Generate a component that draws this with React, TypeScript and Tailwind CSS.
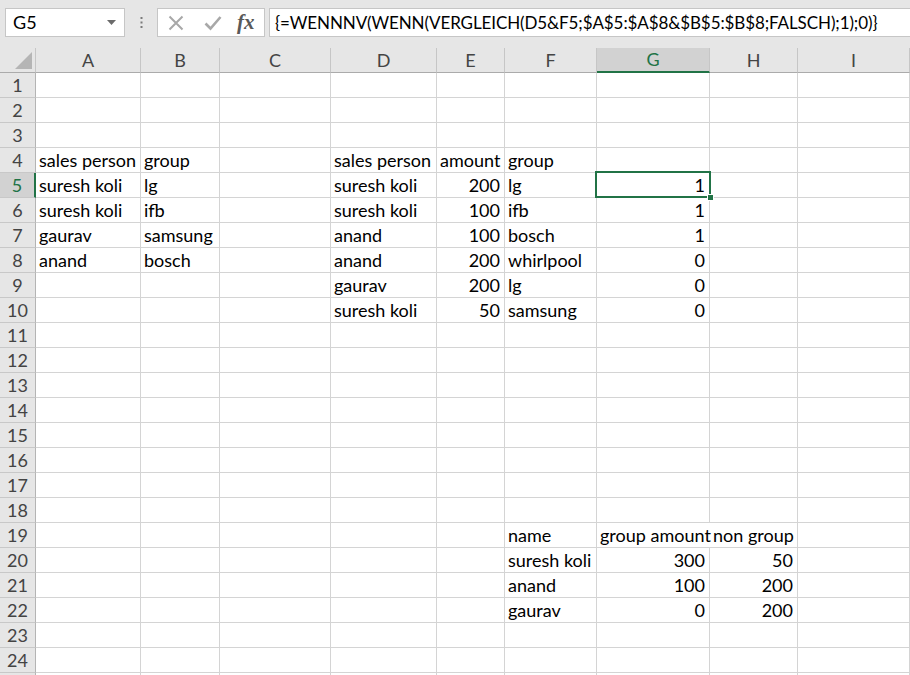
import React from "react";

const COLS = ["A", "B", "C", "D", "E", "F", "G", "H", "I"];
const WIDTHS = ["w-[105px]", "w-[79px]", "w-[111px]", "w-[106px]", "w-[68px]", "w-[92px]", "w-[113px]", "w-[88px]", "flex-1"];

type CellVal = { t: string; r?: boolean };
const data: Record<number, Record<string, CellVal>> = {
  4: { A: { t: "sales person" }, B: { t: "group" }, D: { t: "sales person" }, E: { t: "amount" }, F: { t: "group" } },
  5: { A: { t: "suresh koli" }, B: { t: "lg" }, D: { t: "suresh koli" }, E: { t: "200", r: true }, F: { t: "lg" }, G: { t: "1", r: true } },
  6: { A: { t: "suresh koli" }, B: { t: "ifb" }, D: { t: "suresh koli" }, E: { t: "100", r: true }, F: { t: "ifb" }, G: { t: "1", r: true } },
  7: { A: { t: "gaurav" }, B: { t: "samsung" }, D: { t: "anand" }, E: { t: "100", r: true }, F: { t: "bosch" }, G: { t: "1", r: true } },
  8: { A: { t: "anand" }, B: { t: "bosch" }, D: { t: "anand" }, E: { t: "200", r: true }, F: { t: "whirlpool" }, G: { t: "0", r: true } },
  9: { D: { t: "gaurav" }, E: { t: "200", r: true }, F: { t: "lg" }, G: { t: "0", r: true } },
  10: { D: { t: "suresh koli" }, E: { t: "50", r: true }, F: { t: "samsung" }, G: { t: "0", r: true } },
  19: { F: { t: "name" }, G: { t: "group amount" }, H: { t: "non group" } },
  20: { F: { t: "suresh koli" }, G: { t: "300", r: true }, H: { t: "50", r: true } },
  21: { F: { t: "anand" }, G: { t: "100", r: true }, H: { t: "200", r: true } },
  22: { F: { t: "gaurav" }, G: { t: "0", r: true }, H: { t: "200", r: true } },
};

const font = { fontFamily: "Lato, 'Noto Sans', sans-serif" };

function Row({ n }: { n: number }) {
  const sel = n === 5;
  return (
    <div className="flex h-[25px]">
      <div
        className={
          sel
            ? "w-[36px] shrink-0 h-[25px] bg-[#d2d2d2] border-b border-[#c8c8c8] border-r-2 border-r-[#217346] flex items-center justify-center text-[18px] text-[#217346]"
            : "w-[36px] shrink-0 h-[25px] bg-[#e6e6e6] border-b border-[#c8c8c8] border-r border-r-[#b4b4b4] flex items-center justify-center text-[18px] text-[#444444]"
        }
      >
        {n <= 24 ? n : ""}
      </div>
      {COLS.map((c, i) => {
        const v = data[n]?.[c];
        const noRight = n === 19 && c === "G";
        return (
          <div
            key={c}
            className={
              WIDTHS[i] +
              " shrink-0 relative h-[25px] border-b border-[#d4d4d4] flex items-end pb-[1px] px-[3px] text-[18px] leading-[22px] text-black whitespace-nowrap " +
              (noRight ? "" : "border-r ") +
              (v?.r ? "justify-end pr-[4px]" : "justify-start")
            }
          >
            {v?.t}
            {sel && c === "G" && (
              <>
                <div className="absolute left-[-2px] top-[-2px] right-[-2px] bottom-[-1px] border-2 border-[#217346] pointer-events-none" />
                <div className="absolute right-[-5px] bottom-[-4px] w-[7px] h-[7px] bg-[#217346] border border-white z-10" />
              </>
            )}
          </div>
        );
      })}
    </div>
  );
}

export default function App() {
  const rows = Array.from({ length: 25 }, (_, i) => i + 1);
  return (
    <div className="w-[910px] h-[675px] overflow-hidden bg-white select-none" style={font}>
      {/* Formula bar */}
      <div className="h-[48px] bg-[#e6e6e6] flex items-start pt-[8px] pl-[5px]">
        <div className="w-[120px] h-[29px] bg-white border border-[#c6c6c6] flex items-center justify-between pl-[7px] pr-[8px] text-[18px] text-black">
          <span>G5</span>
          <svg width="9" height="5" viewBox="0 0 9 5">
            <path d="M0 0 H9 L4.5 5 Z" fill="#6b6b6b" />
          </svg>
        </div>
        <div className="w-[32px] h-[29px] flex items-center justify-center">
          <svg width="3" height="11" viewBox="0 0 3 11">
            <rect x="0.5" y="0" width="2" height="2" fill="#7a7a7a" />
            <rect x="0.5" y="4.5" width="2" height="2" fill="#7a7a7a" />
            <rect x="0.5" y="9" width="2" height="2" fill="#7a7a7a" />
          </svg>
        </div>
        <div className="w-[108px] h-[29px] bg-white border border-[#c6c6c6] flex items-center pl-[9px]">
          <svg width="16" height="16" viewBox="0 0 16 16" className="ml-[1px]">
            <path d="M1.5 1.5 L14.5 14.5 M14.5 1.5 L1.5 14.5" stroke="#a8a8a8" strokeWidth="2" />
          </svg>
          <svg width="18" height="16" viewBox="0 0 18 16" className="ml-[20px]">
            <path d="M1.5 8.5 L6.5 13.5 L16.5 2" stroke="#a8a8a8" strokeWidth="2.6" fill="none" />
          </svg>
          <span
            className="ml-[15px] text-[21px] italic font-bold text-[#595959] leading-none"
            style={{ fontFamily: "'Liberation Serif', 'DejaVu Serif', serif" }}
          >
            fx
          </span>
        </div>
        <div className="ml-[4px] flex-1 h-[29px] bg-white border border-[#c6c6c6] border-r-0 flex items-center pl-[5px] text-[17px] tracking-[-0.1px] text-black whitespace-nowrap overflow-hidden">
          {"{=WENNNV(WENN(VERGLEICH(D5&F5;$A$5:$A$8&$B$5:$B$8;FALSCH);1);0)}"}
        </div>
      </div>
      {/* Column headers */}
      <div className="flex h-[25px]">
        <div className="w-[36px] shrink-0 h-[25px] bg-[#e6e6e6] border-b border-[#ababab] border-r border-r-[#c6c6c6] flex items-end justify-end pr-[3px] pb-[3px]">
          <svg width="17" height="17" viewBox="0 0 17 17">
            <path d="M17 0 L17 17 L0 17 Z" fill="#b5b5b5" />
          </svg>
        </div>
        {COLS.map((c, i) => (
          <div
            key={c}
            className={
              WIDTHS[i] +
              " shrink-0 h-[25px] flex items-center justify-center text-[18px] " +
              (c === "G"
                ? "bg-[#d2d2d2] border-b-2 border-[#217346] border-r border-r-[#c6c6c6] text-[#217346]"
                : "bg-[#e6e6e6] border-b border-[#ababab] border-r border-r-[#c6c6c6] text-[#444444]")
            }
          >
            {c}
          </div>
        ))}
      </div>
      {rows.map((n) => (
        <Row key={n} n={n} />
      ))}
    </div>
  );
}
